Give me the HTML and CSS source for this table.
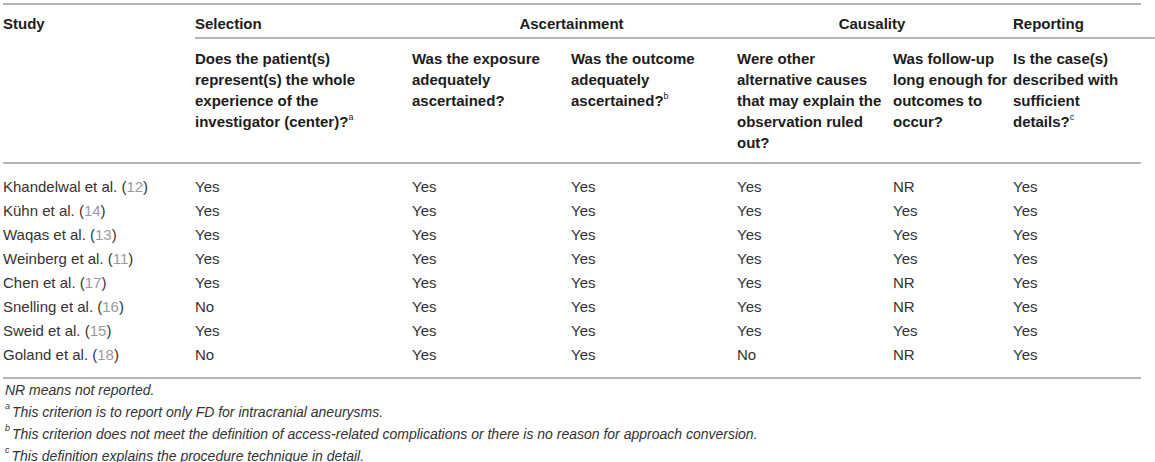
FILE: index.html
```html
<!DOCTYPE html>
<html>
<head>
    <title>Quality assessment</title>
    <link rel="stylesheet" href="styles.css">
</head>
<body>
    <div class="wrap">
        <table class="grid">
            <colgroup>
                <col class="c-study">
                <col class="c-sel">
                <col class="c-asc1">
                <col class="c-asc2">
                <col class="c-cau1">
                <col class="c-cau2">
                <col class="c-rep">
            </colgroup>
            <thead>
                <tr class="groups">
                    <th rowspan="2" class="study-head">Study</th>
                    <th>Selection</th>
                    <th colspan="2" class="center">Ascertainment</th>
                    <th colspan="2" class="center">Causality</th>
                    <th class="last-group">Reporting</th>
                </tr>
                <tr class="questions">
                    <th>Does the patient(s) represent(s) the whole experience of the investigator (center)?<sup>a</sup></th>
                    <th>Was the exposure adequately ascertained?</th>
                    <th>Was the outcome adequately ascertained?<sup>b</sup></th>
                    <th>Were other alternative causes that may explain the observation ruled out?</th>
                    <th class="tight">Was follow-up long enough for outcomes to occur?</th>
                    <th>Is the case(s) described with sufficient details?<sup>c</sup></th>
                </tr>
            </thead>
            <tbody>
                <tr><td>Khandelwal et al. (<span class="ref">12</span>)</td><td>Yes</td><td>Yes</td><td>Yes</td><td>Yes</td><td>NR</td><td>Yes</td></tr>
                <tr><td>Kühn et al. (<span class="ref">14</span>)</td><td>Yes</td><td>Yes</td><td>Yes</td><td>Yes</td><td>Yes</td><td>Yes</td></tr>
                <tr><td>Waqas et al. (<span class="ref">13</span>)</td><td>Yes</td><td>Yes</td><td>Yes</td><td>Yes</td><td>Yes</td><td>Yes</td></tr>
                <tr><td>Weinberg et al. (<span class="ref">11</span>)</td><td>Yes</td><td>Yes</td><td>Yes</td><td>Yes</td><td>Yes</td><td>Yes</td></tr>
                <tr><td>Chen et al. (<span class="ref">17</span>)</td><td>Yes</td><td>Yes</td><td>Yes</td><td>Yes</td><td>NR</td><td>Yes</td></tr>
                <tr><td>Snelling et al. (<span class="ref">16</span>)</td><td>No</td><td>Yes</td><td>Yes</td><td>Yes</td><td>NR</td><td>Yes</td></tr>
                <tr><td>Sweid et al. (<span class="ref">15</span>)</td><td>Yes</td><td>Yes</td><td>Yes</td><td>Yes</td><td>Yes</td><td>Yes</td></tr>
                <tr><td>Goland et al. (<span class="ref">18</span>)</td><td>No</td><td>Yes</td><td>Yes</td><td>No</td><td>NR</td><td>Yes</td></tr>
            </tbody>
        </table>
        <div class="notes">
            <p>NR means not reported.</p>
            <p><sup>a</sup>This criterion is to report only FD for intracranial aneurysms.</p>
            <p><sup>b</sup>This criterion does not meet the definition of access-related complications or there is no reason for approach conversion.</p>
            <p><sup>c</sup>This definition explains the procedure technique in detail.</p>
        </div>
    </div>
</body>
</html>
```

FILE: styles.css
```css
body {
    margin: 0;
    padding: 3px 0 0 3px;
    background-color: #ffffff;
    font-family: 'Liberation Sans', Arial, Helvetica, sans-serif;
    color: #333;
}

.wrap {
    width: 1138px;
}

.grid {
    width: 1138px;
    table-layout: fixed;
    border-collapse: collapse;
    font-size: 15px;
}

.c-study { width: 192px; }
.c-sel { width: 217px; }
.c-asc1 { width: 159px; }
.c-asc2 { width: 166px; }
.c-cau1 { width: 156px; }
.c-cau2 { width: 120px; }
.c-rep { width: 128px; }

thead {
    border-top: 2px solid #b4b4b4;
    border-bottom: 2px solid #b4b4b4;
}

th {
    text-align: left;
    vertical-align: top;
    font-weight: bold;
    color: #1c1c1c;
    line-height: 21px;
    padding: 0 6px 0 0;
}

th.center {
    text-align: center;
}

.groups th {
    padding-top: 8px;
    padding-bottom: 3px;
}

.groups th:not(.study-head) {
    border-bottom: 2px solid #b4b4b4;
}

/* the rule under the group titles runs a little past the table */
.last-group {
    position: relative;
}

.last-group::after {
    content: "";
    position: absolute;
    left: 100%;
    bottom: -2px;
    width: 14px;
    height: 2px;
    background-color: #b4b4b4;
}

.questions th {
    padding-top: 9px;
    padding-bottom: 9px;
}

.questions th.tight {
    padding-right: 1px;
}

sup {
    font-size: 9px;
    font-weight: normal;
    line-height: 12px;
    vertical-align: top;
}

td {
    line-height: 24px;
    padding: 0;
    color: #333;
    white-space: nowrap;
}

tbody tr:first-child td {
    padding-top: 11px;
}

tbody tr:last-child td {
    padding-bottom: 10px;
}

tbody {
    border-bottom: 2px solid #b4b4b4;
}

.ref {
    color: #9a9a9a;
}

.notes {
    padding-left: 2px;
}

.notes p {
    margin: 0;
    font-size: 14px;
    font-style: italic;
    line-height: 22px;
    color: #333;
}

.notes sup {
    font-size: 9px;
    line-height: 10px;
    margin-right: 2px;
}
```
